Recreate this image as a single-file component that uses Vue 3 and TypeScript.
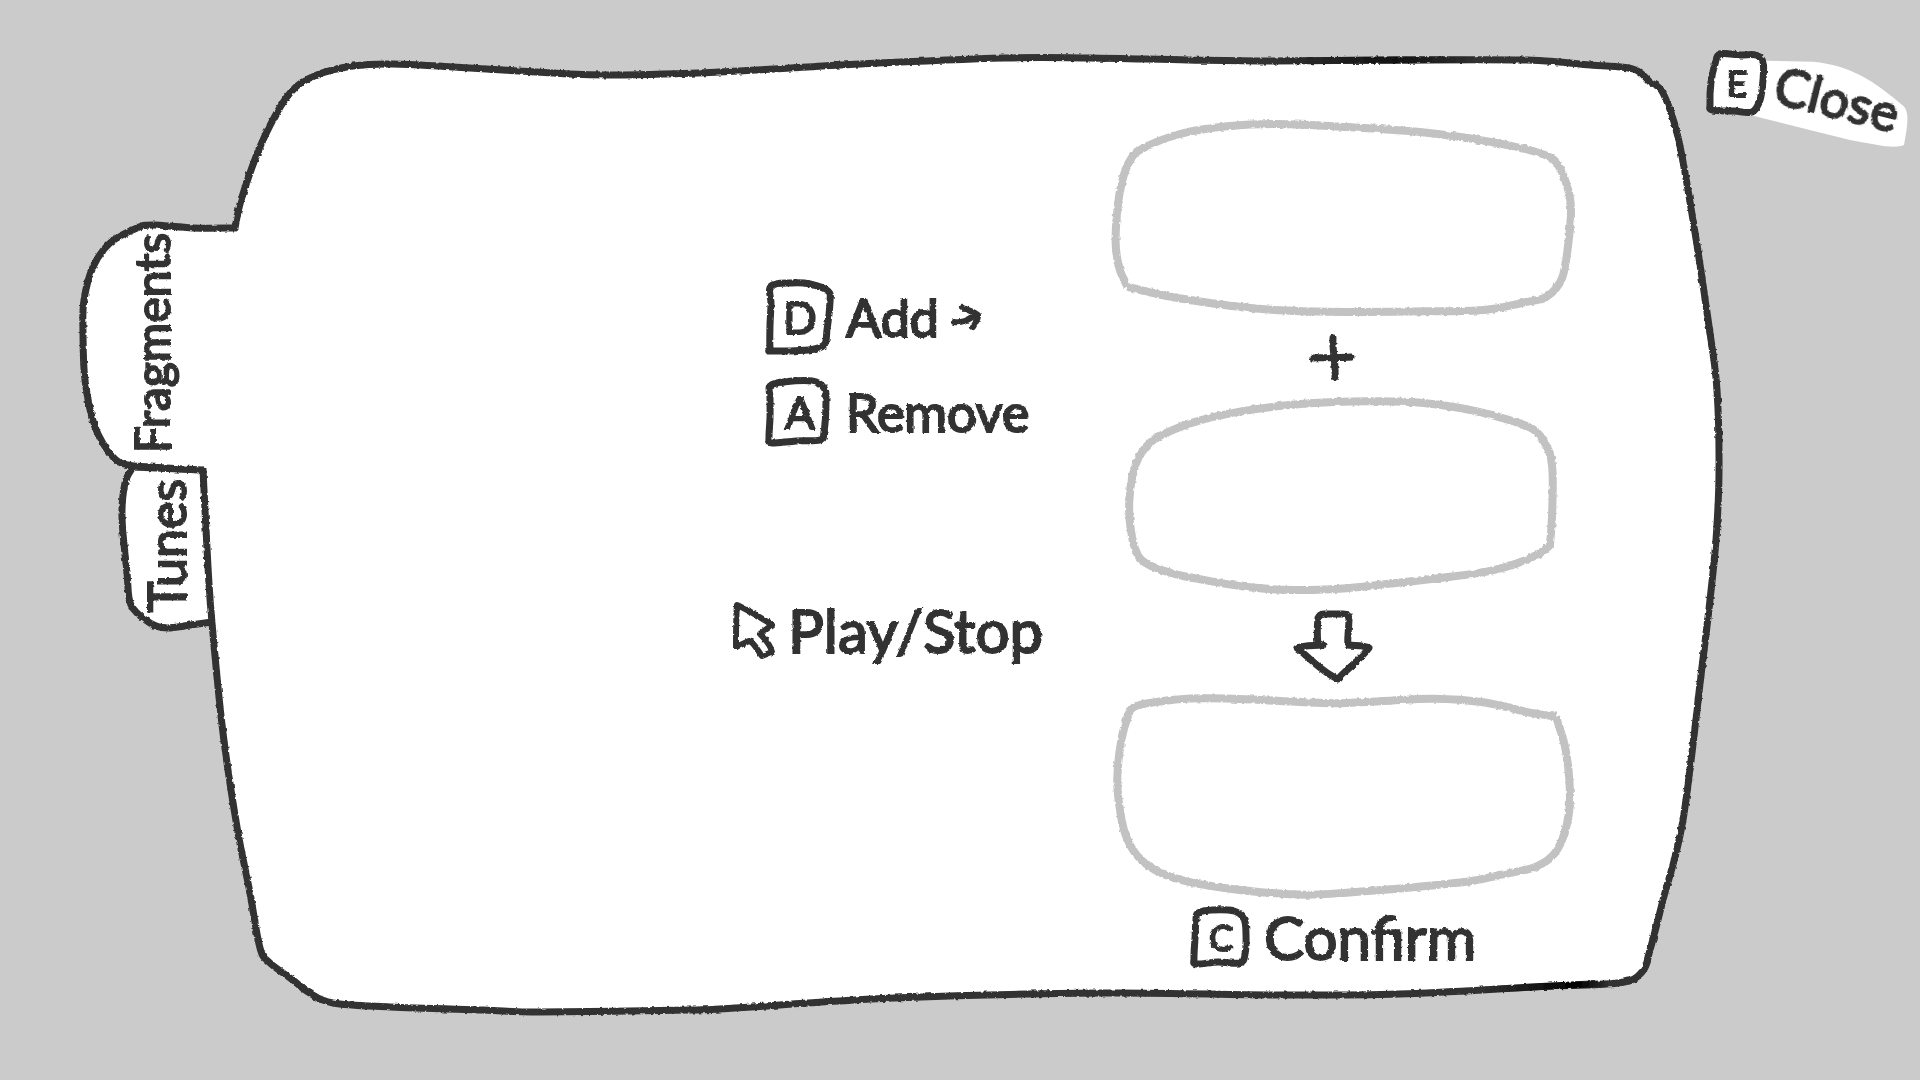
<script setup lang="ts">
type Point = [number, number]

// Turns a list of brush points into a smooth curve; a repeated point makes a sharp corner.
function brush(points: Point[], closed = false): string {
  const n = points.length
  const at = (i: number): Point =>
    closed ? points[(i + n) % n] : points[Math.min(Math.max(i, 0), n - 1)]
  let d = `M${points[0][0]} ${points[0][1]}`
  const last = closed ? n : n - 1
  for (let i = 0; i < last; i++) {
    const [a, b, c, e] = [at(i - 1), at(i), at(i + 1), at(i + 2)]
    if (b[0] === c[0] && b[1] === c[1]) continue
    const x1 = b[0] + (c[0] - a[0]) / 6
    const y1 = b[1] + (c[1] - a[1]) / 6
    const x2 = c[0] - (e[0] - b[0]) / 6
    const y2 = c[1] - (e[1] - b[1]) / 6
    d += `C${x1.toFixed(1)} ${y1.toFixed(1)} ${x2.toFixed(1)} ${y2.toFixed(1)} ${c[0]} ${c[1]}`
  }
  return closed ? d + 'Z' : d
}

const frame = brush([
  [235, 228], [235, 228], [242, 197], [263, 140], [290, 93], [317, 75], [353, 66], [393, 64],
  [453, 67], [553, 73], [613, 75], [720, 72], [860, 64], [1004, 58], [1090, 58], [1188, 60],
  [1273, 61], [1400, 60], [1527, 60], [1590, 65], [1633, 69], [1650, 82], [1663, 93], [1678, 137],
  [1693, 220], [1710, 333], [1717, 390], [1719, 473], [1716, 540], [1710, 600], [1702, 667],
  [1683, 820], [1663, 900], [1650, 950], [1642, 972], [1618, 983], [1533, 987], [1400, 994],
  [1273, 995], [1102, 993], [894, 998], [735, 1008], [690, 1010], [540, 1012], [483, 1010],
  [390, 1007], [333, 1003], [308, 992], [293, 980], [270, 963], [260, 948], [250, 893], [237, 827],
  [223, 733], [212, 623], [208, 567], [203, 470], [203, 470], [150, 467], [128, 465], [113, 457],
  [95, 427], [85, 380], [83, 333], [84, 300], [93, 267], [110, 243], [137, 228], [153, 225],
  [193, 228], [235, 228],
])

const tunesTab = brush([
  [203, 470], [203, 470], [133, 467], [133, 467], [125, 483], [122, 517], [127, 573], [131, 605],
  [150, 623], [167, 628], [190, 625], [212, 622],
])

const slots = [
  {
    box: '0 0 1470 648',
    path: brush([
      [82, 530], [82, 530], [58, 475], [47, 400], [53, 290], [66, 215], [88, 155], [125, 117],
      [240, 72], [380, 49], [530, 42], [740, 51], [960, 66], [1180, 97], [1335, 135], [1380, 175],
      [1406, 245], [1413, 300], [1405, 400], [1386, 505], [1340, 560], [1270, 578], [1150, 600],
      [980, 604], [740, 606], [540, 601], [390, 587], [200, 558], [82, 530], [82, 530],
    ]),
  },
  {
    box: '0 -6 1470 648',
    path: brush([
      [115, 205], [150, 158], [200, 128], [290, 94], [420, 65], [560, 46], [700, 36], [840, 34],
      [970, 39], [1080, 54], [1200, 82], [1300, 118], [1343, 175], [1356, 225], [1358, 310],
      [1352, 440], [1340, 475], [1270, 513], [1160, 545], [1020, 564], [860, 582], [720, 596],
      [580, 600], [450, 592], [340, 575], [220, 551], [135, 518], [105, 475], [90, 400], [88, 330],
      [97, 260],
    ], true),
  },
  {
    box: '0 18 1470 648',
    path: brush([
      [1368, 110], [1368, 110], [1395, 200], [1408, 300], [1408, 390], [1388, 475], [1355, 530],
      [1300, 563], [1200, 585], [1110, 604], [940, 622], [740, 638], [620, 644], [500, 638],
      [380, 625], [260, 604], [170, 573], [110, 525], [75, 460], [57, 370], [52, 290], [64, 180],
      [85, 105], [100, 82], [140, 70], [260, 56], [400, 56], [540, 63], [700, 70], [850, 63],
      [1000, 56], [1150, 67], [1290, 98], [1368, 110], [1368, 110],
    ]),
  },
]

const keyShapes = {
  D: brush([[5, 6], [26, 3], [44, 4], [62, 11], [64, 22], [61, 50], [58, 65], [42, 70], [6, 71], [4, 68], [4, 46], [5, 24]], true),
  A: brush([[4, 8], [18, 4], [46, 3], [58, 10], [60, 22], [58, 54], [54, 62], [30, 63], [5, 65], [3, 60], [4, 40], [4, 20]], true),
  E: brush([[14, 4], [34, 5], [50, 5], [57, 12], [57, 30], [54, 50], [46, 62], [28, 61], [6, 60], [4, 54], [5, 32], [9, 14]], true),
  C: brush([[8, 7], [22, 4], [44, 5], [54, 13], [56, 28], [55, 48], [50, 57], [28, 56], [6, 58], [4, 52], [5, 32], [6, 14]], true),
}
</script>

<template>
  <main class="scene">
    <svg class="backdrop" viewBox="0 0 1920 1080" preserveAspectRatio="none" aria-hidden="true">
      <defs>
        <filter id="rough" x="-5%" y="-5%" width="110%" height="110%">
          <feTurbulence type="fractalNoise" baseFrequency="0.25" numOctaves="2" seed="4" />
          <feDisplacementMap in="SourceGraphic" scale="3" xChannelSelector="R" yChannelSelector="G" />
        </filter>
        <linearGradient id="inkTop" gradientUnits="userSpaceOnUse" x1="1270" y1="0" x2="1480" y2="0">
          <stop offset="0" stop-color="#111" stop-opacity="0" />
          <stop offset="0.6" stop-color="#111" />
          <stop offset="1" stop-color="#111" stop-opacity="0" />
        </linearGradient>
        <linearGradient id="inkBottom" gradientUnits="userSpaceOnUse" x1="1480" y1="0" x2="1610" y2="0">
          <stop offset="0" stop-color="#000" stop-opacity="0" />
          <stop offset="0.75" stop-color="#000" />
          <stop offset="1" stop-color="#000" stop-opacity="0" />
        </linearGradient>
      </defs>
      <g filter="url(#rough)">
        <path class="ink paper" :d="tunesTab" />
        <path class="ink paper" :d="frame" />
        <path class="ink dark-top" d="M1273 61L1400 60L1480 60" />
        <path class="ink dark-bottom" d="M1480 990L1533 987L1610 983" />
      </g>
    </svg>

    <nav class="tabs" aria-label="Collection">
      <button type="button" class="tab fragments"><span>Fragments</span></button>
      <button type="button" class="tab tunes"><span>Tunes</span></button>
    </nav>

    <section class="library" aria-label="Library"></section>

    <section class="actions" aria-label="Actions">
      <button type="button" class="hint add">
        <span class="key">
          <svg width="68" height="74" viewBox="0 0 68 74"><path class="ink" :d="keyShapes.D" /></svg>
          <kbd>D</kbd>
        </span>
        <span class="label">Add</span>
        <svg class="sketch" width="32" height="28" viewBox="0 0 32 28" aria-hidden="true">
          <path class="ink thin" d="M3 19C9 20 18 18 25 11M11 4C15 7 22 8 27 12C28 15 25 19 22 24" />
        </svg>
      </button>
      <button type="button" class="hint remove">
        <span class="key">
          <svg width="68" height="68" viewBox="0 0 68 68"><path class="ink" :d="keyShapes.A" /></svg>
          <kbd>A</kbd>
        </span>
        <span class="label">Remove</span>
      </button>
      <button type="button" class="hint play">
        <svg class="sketch" width="44" height="60" viewBox="0 0 44 60" aria-hidden="true">
          <path class="ink thin" d="M5 5C4 18 4 32 4 47L17 41C22 42 25 50 30 56L40 52C39 46 34 40 28 34L40 25C28 17 16 10 5 5Z" />
        </svg>
        <span class="label large">Play/Stop</span>
      </button>
    </section>

    <section class="mixer" aria-label="Combine">
      <svg class="slot" :viewBox="slots[0].box" preserveAspectRatio="none"><path :d="slots[0].path" /></svg>
      <svg class="sketch" width="48" height="48" viewBox="0 0 48 48" aria-hidden="true">
        <path class="ink" d="M4 25C16 24 32 25 42 24M24 5C23 16 27 30 26 44" />
      </svg>
      <svg class="slot" :viewBox="slots[1].box" preserveAspectRatio="none"><path :d="slots[1].path" /></svg>
      <svg class="sketch" width="84" height="76" viewBox="0 0 84 76" aria-hidden="true">
        <path class="ink" d="M32 38L27 38C26 28 26 20 27 12Q28 7 33 7L52 7Q58 7 58 12C58 22 56 30 57 38C64 39 72 38 78 41C69 53 58 60 47 72C32 66 19 51 6 41C14 38 22 39 31 38" />
      </svg>
      <svg class="slot" :viewBox="slots[2].box" preserveAspectRatio="none"><path :d="slots[2].path" /></svg>
      <button type="button" class="hint confirm">
        <span class="key small">
          <svg width="62" height="62" viewBox="0 0 62 62"><path class="ink" :d="keyShapes.C" /></svg>
          <kbd>C</kbd>
        </span>
        <span class="label large">Confirm</span>
      </button>
    </section>

    <aside class="corner">
      <button type="button" class="hint close">
        <svg class="highlight" width="230" height="130" viewBox="0 0 690 390" aria-hidden="true">
          <path d="M225 92L370 95C480 106 550 150 640 228C660 245 652 290 642 345C610 358 560 344 480 330L350 298L180 255Z" />
        </svg>
        <span class="key small">
          <svg width="62" height="66" viewBox="0 0 62 66"><path class="ink paper" :d="keyShapes.E" /></svg>
          <kbd>E</kbd>
        </span>
        <span class="label tilted">Close</span>
      </button>
    </aside>
  </main>
</template>

<style>
body {
  margin: 0;
  background: #cbcbcb;
}
</style>

<style scoped>
.scene {
  position: relative;
  display: grid;
  grid-template-columns:
    minmax(0, 240fr) minmax(0, 492fr) minmax(0, 368fr) minmax(0, 490fr) minmax(0, 100fr)
    minmax(0, 230fr);
  grid-template-rows: minmax(0, 1fr);
  height: 100vh;
  min-height: 640px;
  overflow: hidden;
  background: #cbcbcb;
  color: #323232;
  font-family: Lato, 'Open Sans', sans-serif;
}

.backdrop {
  position: absolute;
  inset: 0;
  width: 100%;
  height: 100%;
}

.ink {
  fill: none;
  stroke: #323232;
  stroke-width: 7px;
  stroke-linecap: round;
  stroke-linejoin: round;
  vector-effect: non-scaling-stroke;
}

.thin {
  stroke-width: 6px;
}

.dark-top {
  stroke: url(#inkTop);
}

.dark-bottom {
  stroke: url(#inkBottom);
}

.paper {
  fill: #fff;
}

.sketch,
.slot,
.key svg {
  overflow: visible;
  filter: url(#rough);
}

button {
  position: relative;
  margin: 0;
  padding: 0;
  border: 0;
  background: none;
  color: inherit;
  font: inherit;
  cursor: pointer;
}

.tabs {
  display: grid;
  grid-template-rows: minmax(0, 226fr) minmax(0, 242fr) minmax(0, 160fr) minmax(0, 452fr);
}

.tab {
  display: flex;
  align-items: center;
  justify-content: center;
  line-height: 64px;
}

.tab span {
  writing-mode: vertical-rl;
  transform: rotate(180deg);
  -webkit-text-stroke: 2px currentColor;
  filter: url(#rough);
}

.fragments {
  grid-row: 2;
  margin: 0 16px 8px 80px;
  font-size: 48px;
}

.tunes {
  grid-row: 3;
  margin: 0 32px 4px 124px;
  font-size: 52px;
}

.actions {
  display: grid;
  grid-template-rows:
    minmax(0, 270fr) minmax(0, 94fr) minmax(0, 96fr) minmax(0, 120fr) minmax(0, 100fr)
    minmax(0, 400fr);
  justify-items: start;
}

.hint {
  display: flex;
  align-items: center;
  gap: 12px;
  white-space: nowrap;
}

.add {
  grid-row: 2;
  padding-left: 34px;
}

.remove {
  grid-row: 3;
  padding-left: 34px;
}

.play {
  grid-row: 5;
}

.key {
  position: relative;
  display: grid;
  place-items: center;
}

.key svg,
.key kbd {
  grid-area: 1 / 1;
}

.key kbd {
  font-family: inherit;
  font-size: 44px;
  line-height: 48px;
  -webkit-text-stroke: 2px currentColor;
  filter: url(#rough);
}

.key.small kbd {
  font-size: 36px;
  line-height: 40px;
}

.label {
  font-size: 52px;
  line-height: 64px;
  -webkit-text-stroke: 2px currentColor;
  filter: url(#rough);
}

.label.large {
  font-size: 60px;
  line-height: 72px;
}

.mixer {
  display: grid;
  grid-template-rows:
    minmax(0, 110fr) minmax(0, 216fr) minmax(0, 62fr) minmax(0, 216fr) minmax(0, 82fr)
    minmax(0, 216fr) minmax(0, 70fr) minmax(0, 108fr);
  place-items: center;
}

.mixer::before {
  content: '';
}

.mixer .sketch,
.confirm {
  margin-right: 24px;
}

.slot {
  width: 100%;
  height: 100%;
}

.slot path {
  fill: none;
  stroke: #c2c2c2;
  stroke-width: 8px;
  stroke-linejoin: round;
  vector-effect: non-scaling-stroke;
}

.corner {
  grid-column: 6;
  padding: 50px 0 0 16px;
}

.close {
  gap: 8px;
}

.highlight {
  position: absolute;
  top: -20px;
  left: -16px;
  fill: #fff;
}

.tilted {
  transform: rotate(14deg);
  transform-origin: left center;
}
</style>
